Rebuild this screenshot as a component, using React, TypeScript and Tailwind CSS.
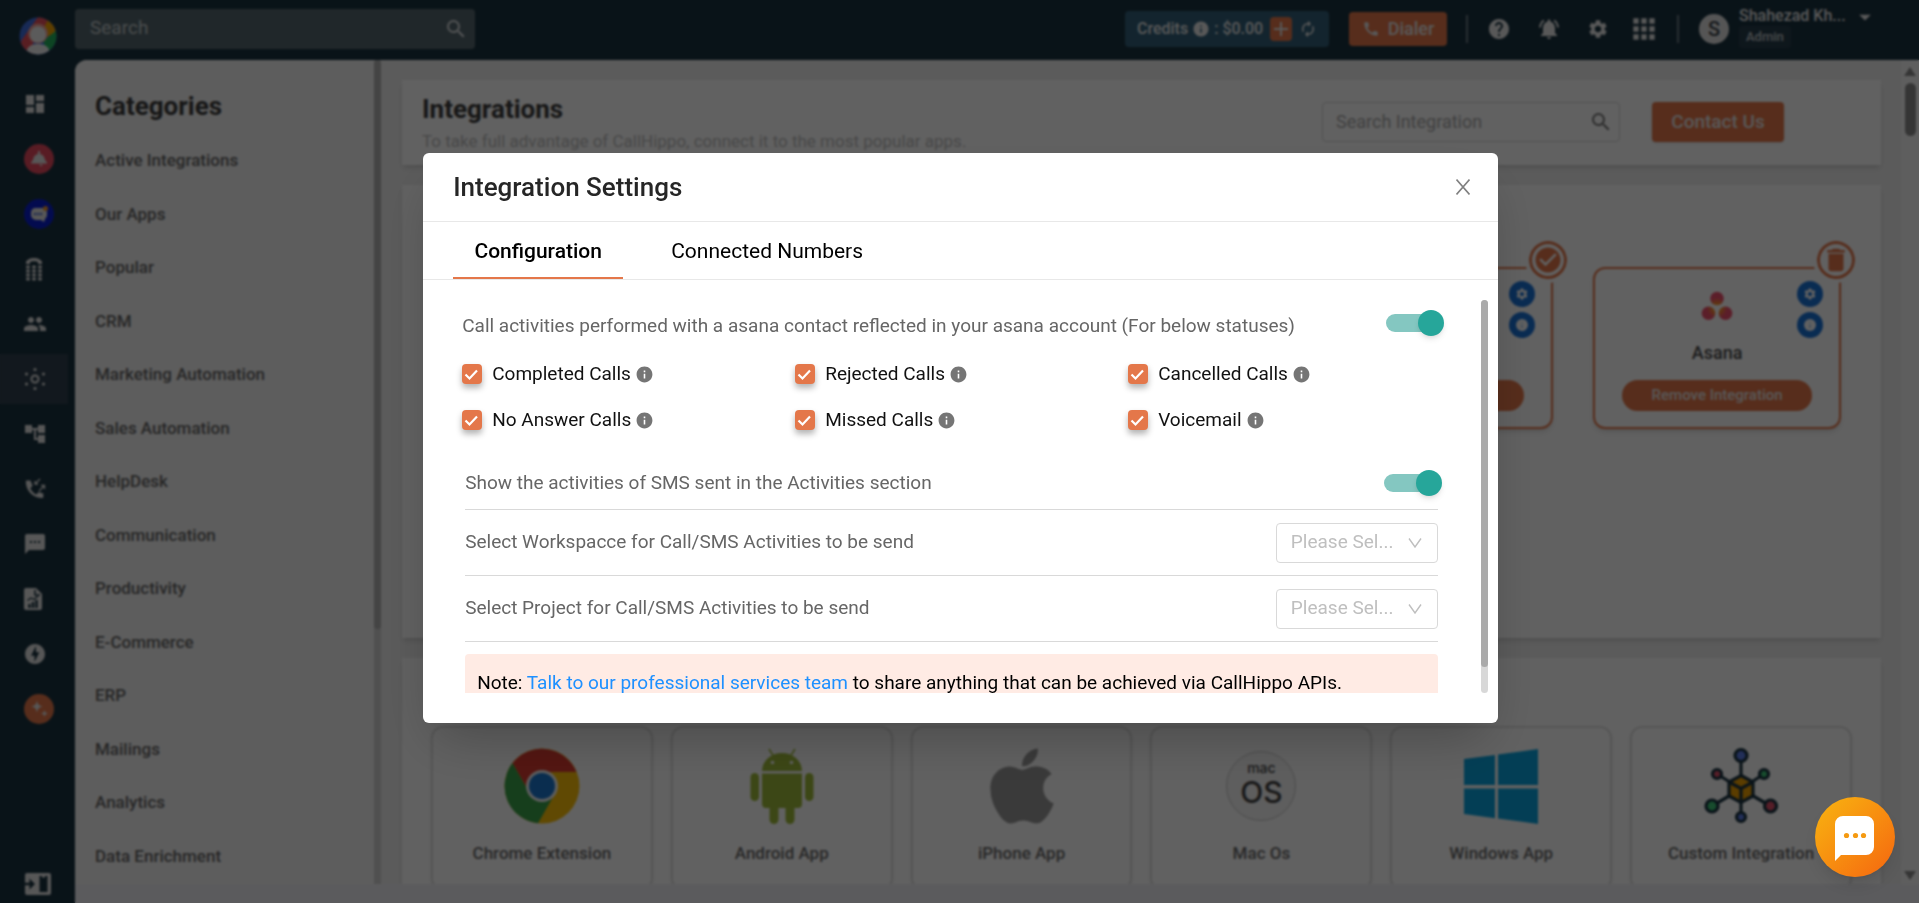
import React from "react";
import {
  MdAccountTree,
  MdApps,
  MdArrowDropDown,
  MdAutorenew,
  MdCall,
  MdCheckCircle,
  MdDashboard,
  MdDelete,
  MdHelp,
  MdInfo,
  MdNotificationsActive,
  MdOfflineBolt,
  MdPeople,
  MdSearch,
  MdSettings,
  MdSms,
} from "react-icons/md";
import { FaApple } from "react-icons/fa";

const categories = [
  "Active Integrations",
  "Our Apps",
  "Popular",
  "CRM",
  "Marketing Automation",
  "Sales Automation",
  "HelpDesk",
  "Communication",
  "Productivity",
  "E-Commerce",
  "ERP",
  "Mailings",
  "Analytics",
  "Data Enrichment",
];

function Logo() {
  return (
    <svg viewBox="0 0 38 38" className="size-[38px]" aria-hidden="true">
      <defs>
        <clipPath id="logo-clip">
          <circle cx="19" cy="19" r="18.5" />
        </clipPath>
      </defs>
      <g clipPath="url(#logo-clip)">
        <rect width="38" height="38" fill="#3f6fe0" />
        <path d="M19 0 L30 0 L30 12 L24 14 L6 28 L2 24 Z" fill="#e8505b" />
        <path d="M0 26 L14 20 L14 38 L6 36 Z" fill="#e8505b" />
        <path d="M29 3 L38 8 L36 16 L28 20 L24 12 Z" fill="#f5a400" />
        <path d="M38 13 L38 30 L28 34 L24 24 Z" fill="#23b45d" />
        <circle cx="19" cy="16.500" r="10" fill="#f3a59a" />
        <circle cx="19" cy="17.500" r="8" fill="#f0f0f0" />
        <path d="M7 38 C7 29 13 27 19 27 C25 27 31 29 31 38 Z" fill="#f0f0f0" />
      </g>
    </svg>
  );
}

function KeypadIcon() {
  return (
    <svg viewBox="0 0 18 24" className="h-6 w-[18px]" fill="currentColor" aria-hidden="true">
      <path d="M1 7V5C2 2.500 5.500 1 9 1s7 1.500 8 4v2h-4V5C11 4 7 4 5 5v2z" />
      {[10, 14, 18, 22].map((y) =>
        [3, 9, 15].map((x) => <rect key={x + "-" + y} x={x - 1.8} y={y - 1.4} width="3.600" height="2.800" rx="0.600" />),
      )}
    </svg>
  );
}

function HubIcon() {
  return (
    <svg viewBox="0 0 24 24" className="size-6" fill="currentColor" aria-hidden="true">
      <circle cx="12" cy="12" r="3.500" fill="none" stroke="currentColor" strokeWidth="2" />
      <circle cx="12" cy="2.500" r="1.600" />
      <circle cx="12" cy="21.500" r="1.600" />
      <circle cx="3.500" cy="7" r="1.600" />
      <circle cx="20.500" cy="7" r="1.600" />
      <circle cx="3.500" cy="17" r="1.600" />
      <circle cx="20.500" cy="17" r="1.600" />
    </svg>
  );
}

function CallLogIcon() {
  return (
    <svg viewBox="0 0 24 24" className="size-6" fill="none" aria-hidden="true">
      <path
        d="M7.500 3.500H3.800c-.6 0-1 .4-1 1C2.800 13.500 10 21 19.300 21c.6 0 1-.4 1-1v-3.600l-4.500-1.300-2.500 2.300c-2.600-1.300-4.700-3.400-6-6l2.300-2.600z"
        fill="currentColor"
      />
      <path d="M17 2l-5 5m0-3v3h3M16 14l5.500-5.500m-3.500 0h3.500V12" stroke="currentColor" strokeWidth="1.300" />
    </svg>
  );
}

function ReportIcon() {
  return (
    <svg viewBox="0 0 20 24" className="h-6 w-5" aria-hidden="true">
      <path d="M3 1h10l6 6v14a2 2 0 0 1-2 2H3a2 2 0 0 1-2-2V3a2 2 0 0 1 2-2z" fill="currentColor" />
      <path d="M12 3v5h5" stroke="#1a3340" strokeWidth="1.500" fill="none" />
      <path d="M6.500 21v-4M10 21v-6M13.500 21v-8" stroke="#1a3340" strokeWidth="2.400" />
      <path d="M4.500 13.500L8 11l3 1.500 4-3.500" stroke="#1a3340" strokeWidth="1.300" fill="none" />
    </svg>
  );
}

function BellDishIcon() {
  return (
    <svg viewBox="0 0 18 16" className="h-4 w-[18px]" fill="currentColor" aria-hidden="true">
      <path d="M8 0h2v3C13 3.500 14.500 6 15 9l2 2.500v1H1v-1L3 9c.5-3 2-5.500 5-6z" />
      <path d="M9 13.500h4l-2 2z" />
    </svg>
  );
}

function ChatBadgeIcon() {
  return (
    <svg viewBox="0 0 20 18" className="h-[18px] w-5" aria-hidden="true">
      <path
        d="M6 3h8a5 5 0 0 1 4 5v2a5 5 0 0 1-2 4l-1 3-3-2H7a5 5 0 0 1-5-5V8a5 5 0 0 1 4-5z"
        fill="currentColor"
      />
      <path d="M5 9h8" stroke="#3a5fd0" strokeWidth="2" strokeDasharray="2 1" />
      <circle cx="16.500" cy="3.500" r="2.500" fill="#f2992e" />
    </svg>
  );
}

function SparkleIcon() {
  return (
    <svg viewBox="0 0 20 20" className="size-5" fill="currentColor" aria-hidden="true">
      <path d="M8 1.500c.8 4 2 5.200 6 6-4 .8-5.200 2-6 6-.8-4-2-5.200-6-6 4-.8 5.200-2 6-6z" />
      <path d="M15.500 11c.5 2.300 1.200 3 3.500 3.500-2.300.5-3 1.200-3.500 3.500-.5-2.300-1.200-3-3.500-3.500 2.300-.5 3-1.200 3.500-3.500z" />
    </svg>
  );
}

function PanelIcon() {
  return (
    <svg viewBox="0 0 26 24" className="h-6 w-[26px]" aria-hidden="true">
      <rect x="0" y="1" width="26" height="22" rx="2" fill="currentColor" />
      <rect x="14.500" y="4" width="8" height="16" fill="#1a3340" />
      <path d="M0 10.700h4.500V6.500L10 12l-5.500 5.500v-4.200H0z" fill="#1a3340" />
      <rect x="17" y="3.500" width="3" height="2" fill="currentColor" />
    </svg>
  );
}

function Chrome() {
  return (
    <svg viewBox="0 0 76 76" className="size-[76px]" aria-hidden="true">
      <circle cx="38" cy="38" r="37.500" fill="#fbc009" />
      <path d="M8.500 15A37.500 37.500 0 0 1 72.500 24H38L24 42z" fill="#db3b30" />
      <path d="M8.500 15A37.500 37.500 0 0 0 34 75.300L49 49 38 40 25 44z" fill="#3aa24b" />
      <circle cx="38" cy="38" r="16" fill="#f5f5f5" />
      <circle cx="38" cy="38" r="13" fill="#1b78d0" />
    </svg>
  );
}

function Android() {
  return (
    <svg viewBox="0 0 64 76" className="h-[76px] w-16" fill="#9fbb3b" aria-hidden="true">
      <path d="M12 23a20 18 0 0 1 40 0z" />
      <path d="M19 1l5 8M45 1l-5 8" stroke="#9fbb3b" strokeWidth="1.500" />
      <path d="M12 25.500h40V56a4 4 0 0 1-4 4H16a4 4 0 0 1-4-4z" />
      <rect x="0.500" y="25" width="8.500" height="28" rx="4.250" />
      <rect x="55" y="25" width="8.500" height="28" rx="4.250" />
      <rect x="19.500" y="50" width="9" height="26" rx="4.500" />
      <rect x="35.500" y="50" width="9" height="26" rx="4.500" />
      <circle cx="22.500" cy="14.500" r="1.800" fill="#fff" />
      <circle cx="41.500" cy="14.500" r="1.800" fill="#fff" />
    </svg>
  );
}

function MacOs() {
  return (
    <span className="flex size-[70px] flex-col items-center justify-center rounded-full border border-[#c8c8c8] bg-[#f6f6f6] pb-1 font-['Inter',sans-serif] text-[#444]">
      <span className="text-sm leading-4 font-medium">mac</span>
      <span className="text-3xl leading-8 font-medium">OS</span>
    </span>
  );
}

function Windows() {
  return (
    <svg viewBox="0 0 74 76" className="h-[76px] w-[74px]" fill="#0aa4e0" aria-hidden="true">
      <path d="M0 11L31 7v30H0zM34 6.500L74 1v36H34zM0 40.500h31v29.700L0 66zM34 40.500h40V76l-40-5.500z" />
    </svg>
  );
}

function CustomHub() {
  const nodes = [
    { x: 37, y: 8.5, r: 6, c: "#5b7be8" },
    { x: 13, y: 27, r: 4.5, c: "#e0506a" },
    { x: 60, y: 27, r: 4.5, c: "#3fc878" },
    { x: 8, y: 59, r: 6, c: "#3fc878" },
    { x: 66.5, y: 59, r: 6, c: "#e0506a" },
    { x: 37, y: 70, r: 4.5, c: "#5b7be8" },
  ];
  return (
    <svg viewBox="0 0 74 78" className="h-[78px] w-[74px]" stroke="#1b3442" strokeWidth="3.200" aria-hidden="true">
      {nodes.map((n, i) => (
        <g key={i}>
          <line x1="37" y1="42" x2={n.x} y2={n.y} />
          <circle cx={n.x} cy={n.y} r={n.r} fill={n.c} />
        </g>
      ))}
      <path d="M37 28.500l12 6.500v14l-12 6.500L25 49V35z" fill="#f0a000" />
      <path d="M25 35l12 6.500L49 35M37 41.500V55" fill="none" />
    </svg>
  );
}

function AsanaLogo() {
  return (
    <svg viewBox="0 0 32 30" className="h-[30px] w-8" aria-hidden="true">
      <defs>
        <radialGradient id="asana-fill" gradientUnits="userSpaceOnUse" cx="16" cy="17" r="17">
          <stop offset="0" stopColor="#ffb900" />
          <stop offset="0.600" stopColor="#f0506e" />
          <stop offset="1" stopColor="#f0506e" />
        </radialGradient>
      </defs>
      <circle cx="16" cy="7.500" r="6.800" fill="url(#asana-fill)" />
      <circle cx="7.500" cy="22.300" r="6.800" fill="url(#asana-fill)" />
      <circle cx="24.500" cy="22.300" r="6.800" fill="url(#asana-fill)" />
    </svg>
  );
}

const sideItems = [
  { name: "Dashboard", icon: <MdDashboard className="size-6" /> },
  { name: "Alerts", icon: <BellDishIcon />, disc: "bg-[#e84a5f]" },
  { name: "Chatbot", icon: <ChatBadgeIcon />, disc: "bg-[#0a1fd0]" },
  { name: "Keypad", icon: <KeypadIcon />, narrow: true },
  { name: "Contacts", icon: <MdPeople className="size-6" /> },
  { name: "Integrations", icon: <HubIcon />, active: true },
  { name: "Workflows", icon: <MdAccountTree className="size-6" /> },
  { name: "Call log", icon: <CallLogIcon /> },
  { name: "Messages", icon: <MdSms className="size-6" /> },
  { name: "Reports", icon: <ReportIcon /> },
  { name: "Power dialer", icon: <MdOfflineBolt className="size-6" /> },
  { name: "Assistant", icon: <SparkleIcon />, disc: "bg-[#e4774a]" },
];

function Sidebar() {
  return (
    <nav aria-label="Main" className="flex w-[75px] shrink-0 flex-col bg-[#1a3340] pt-[17px] pb-1 text-[#e4e4e4]">
      <a href="#home" aria-label="Home" className="ml-[19px] block">
        <Logo />
      </a>
      <ul className="mt-6 flex flex-col gap-[5px]">
        {sideItems.map((item) => (
          <li key={item.name}>
            <a
              href={"#" + item.name.toLowerCase().replace(" ", "-")}
              aria-label={item.name}
              className={
                item.active
                  ? "flex h-[50px] w-[68px] items-center bg-[#30404f] pl-[23px]"
                  : item.disc
                    ? "flex h-[50px] w-[68px] items-center pl-6"
                    : item.narrow
                      ? "flex h-[50px] w-[68px] items-center pl-[25px]"
                      : "flex h-[50px] w-[68px] items-center pl-[23px]"
              }
            >
              {item.disc ? (
                <span className={"flex size-[30px] items-center justify-center rounded-full " + item.disc}>{item.icon}</span>
              ) : (
                item.icon
              )}
            </a>
          </li>
        ))}
      </ul>
      <button type="button" aria-label="Expand sidebar" className="mt-auto ml-[25px] self-start pb-[3px]">
        <PanelIcon />
      </button>
    </nav>
  );
}

function Header() {
  return (
    <header className="flex h-[60px] shrink-0 items-center bg-[#1a3340] pr-11 pb-[3px] text-[#e8e8e8]">
      <div className="flex h-10 w-[400px] items-center rounded bg-[#566870] px-[15px]">
        <input
          type="search"
          aria-label="Search"
          placeholder="Search"
          className="min-w-0 flex-1 bg-transparent text-[19px] outline-none placeholder:text-[#c2c8ca]"
        />
        <MdSearch className="-mr-2 size-6 text-[#d8dcde]" />
      </div>
      <div className="ml-auto flex items-center">
        <div className="flex h-9 w-[204px] items-center justify-between rounded bg-[#33607a] px-3 text-base font-medium">
          <span className="flex items-center gap-1">
            Credits <MdInfo className="size-[18px]" /> : $0.00
          </span>
          <button type="button" aria-label="Add credits" className="flex h-6 w-[22px] items-center justify-center rounded bg-[#e4774a]">
            <svg viewBox="0 0 14 14" className="size-3.5" aria-hidden="true">
              <path d="M7 0v14M0 7h14" stroke="currentColor" strokeWidth="2" />
            </svg>
          </button>
          <button type="button" aria-label="Refresh credits">
            <MdAutorenew className="size-[18px]" />
          </button>
        </div>
        <button type="button" className="ml-5 flex h-[34px] w-[98px] items-center justify-center gap-2 rounded bg-[#e4774a] text-lg font-medium">
          <MdCall className="size-[18px]" /> Dialer
        </button>
        <span className="ml-[19px] h-7 w-0.5 bg-[#6a7a84]" />
        <div className="ml-[19px] flex items-center gap-[26px]">
          <button type="button" aria-label="Help"><MdHelp className="size-6" /></button>
          <button type="button" aria-label="Notifications"><MdNotificationsActive className="size-6" /></button>
          <button type="button" aria-label="Settings"><MdSettings className="size-[22px]" /></button>
          <button type="button" aria-label="Apps" className="-ml-[7px]"><MdApps className="size-8" /></button>
        </div>
        <span className="ml-[17px] h-7 w-0.5 bg-[#6a7a84]" />
        <span className="ml-5 flex size-[30px] items-center justify-center rounded-full bg-[#e0e0e0] text-xl font-medium text-[#3a4248]">S</span>
        <div className="ml-2.5 flex w-28 flex-col items-start pb-1">
          <span className="text-base leading-5 font-medium">Shahezad Kh...</span>
          <span className="rounded bg-[#273d4b] px-[7px] text-[13px] leading-[22px] font-medium text-[#c0c6ca]">Admin</span>
        </div>
        <button type="button" aria-label="Account menu" className="mb-6">
          <MdArrowDropDown className="-mr-1 size-7" />
        </button>
      </div>
    </header>
  );
}

function Categories() {
  return (
    <aside className="flex w-[306px] shrink-0 bg-[#f4f4f4]">
      <div className="flex min-w-0 flex-1 flex-col pt-7 pb-4 pl-5">
        <h2 className="text-[26px] leading-9 font-bold text-[#3c3c3c]">Categories</h2>
        <ul className="mt-6 flex flex-1 flex-col justify-between">
          {categories.map((c) => (
            <li key={c}>
              <a href={"#" + c.toLowerCase().replace(" ", "-")} className="block text-[17px] leading-6 font-medium text-[#666]">
                {c}
              </a>
            </li>
          ))}
        </ul>
      </div>
      <div className="w-[7px] bg-[#d2d2d2]">
        <div className="h-[69%] rounded-full bg-[#b2b2b2]" />
      </div>
    </aside>
  );
}

function AppCard({ name, remove, children }: { name: string; remove?: boolean; children: React.ReactNode }) {
  return (
    <article className="relative flex h-[162px] flex-col items-center rounded-xl border-2 border-[#e4774a] px-[27px] pt-[22px] shadow-md">
      {children}
      <h3 className="mt-[18px] text-lg leading-7 font-medium text-[#4a4a4a]">{name}</h3>
      <button type="button" className="mt-[13px] h-[31px] w-full rounded-full bg-[#e4774a] text-[15px] font-medium text-[#e8e8e8]">
        {remove ? "Remove Integration" : "Integrate"}
      </button>
      <button
        type="button"
        aria-label={remove ? "Delete " + name : name + " is active"}
        className="absolute -top-7 -right-4 flex size-[38px] items-center justify-center rounded-full border-[3px] border-[#e4774a] bg-white text-[#e4774a] outline-4 outline-white"
      >
        {remove ? <MdDelete className="size-[30px]" /> : <MdCheckCircle className="size-[30px]" />}
      </button>
      <div className="absolute top-3 right-4 flex flex-col gap-[5px] text-white">
        <button type="button" aria-label={name + " settings"} className="flex size-[26px] items-center justify-center rounded-full bg-[#1a73d8]">
          <MdSettings className="size-3.5" />
        </button>
        <button type="button" aria-label={name + " details"} className="flex size-[26px] items-center justify-center rounded-full bg-[#1a73d8]">
          <svg viewBox="0 0 12 12" className="size-3" aria-hidden="true">
            <circle cx="6" cy="6" r="6" fill="currentColor" />
            <path d="M6 3v1M6 5.500v3.500" stroke="#8fb8e8" strokeWidth="1.200" />
          </svg>
        </button>
      </div>
    </article>
  );
}

const ownApps = [
  { name: "Chrome Extension", icon: <Chrome /> },
  { name: "Android App", icon: <Android /> },
  { name: "iPhone App", icon: <FaApple className="size-[86px] text-[#999]" /> },
  { name: "Mac Os", icon: <MacOs /> },
  { name: "Windows App", icon: <Windows /> },
  { name: "Custom Integration", icon: <CustomHub /> },
];

function Integrations() {
  return (
    <main className="flex min-w-0 flex-1 flex-col gap-5 overflow-hidden bg-[#efefef] pt-5 pr-5 pl-[21px]">
      <section className="flex h-[85px] shrink-0 items-start justify-between bg-white pr-[97px] pl-5 shadow-md">
        <div className="pt-[11px]">
          <h1 className="text-[26px] leading-9 font-bold text-[#3c3c3c]">Integrations</h1>
          <p className="text-[17px] leading-7 text-[#bdbdbd]">
            To take full advantage of CallHippo, connect it to the most popular apps.
          </p>
        </div>
        <div className="flex gap-8 pt-[22px]">
          <div className="flex h-10 w-[298px] items-center rounded border border-[#d5d5d5] pr-1.5 pl-[13px]">
            <input
              type="search"
              aria-label="Search Integration"
              placeholder="Search Integration"
              className="min-w-0 flex-1 bg-transparent text-lg outline-none placeholder:text-[#aaa]"
            />
            <MdSearch className="size-6 text-[#777]" />
          </div>
          <button type="button" className="h-10 w-[132px] rounded bg-[#e4774a] text-[19px] font-medium text-[#e8e8e8] shadow">
            Contact Us
          </button>
        </div>
      </section>
      <section aria-label="Active integrations" className="h-[453px] shrink-0 bg-white px-10 pt-[82px] shadow-md">
        <div className="grid grid-cols-5 gap-10">
          <div className="col-span-3" />
          <AppCard name="Zapier">
            <span className="h-[30px]" />
          </AppCard>
          <AppCard name="Asana" remove>
            <AsanaLogo />
          </AppCard>
        </div>
      </section>
      <section aria-label="Our apps" className="shrink-0 bg-white px-[29px] pt-[68px] pb-8 shadow-md">
        <div className="grid grid-cols-6 gap-[18px]">
          {ownApps.map((app) => (
            <article key={app.name} className="flex h-[164px] flex-col items-center rounded-xl border-2 border-[#e2e2e2] pt-3 shadow">
              <div className="flex h-[92px] items-center justify-center">{app.icon}</div>
              <h3 className="mt-[9px] text-[17px] leading-6 font-medium whitespace-nowrap text-[#6a6a6a]">{app.name}</h3>
            </article>
          ))}
        </div>
      </section>
    </main>
  );
}

function PageScrollbar() {
  return (
    <div className="flex w-[18px] shrink-0 flex-col items-center bg-[#f8f8f8] pt-[7px] pb-1 text-[#8c8c8c]">
      <svg viewBox="0 0 12 9" className="h-[9px] w-3" fill="currentColor" aria-hidden="true"><path d="M6 0l6 9H0z" /></svg>
      <div className="mt-[7px] h-[53px] w-[11px] rounded-full bg-[#8c8c8c]" />
      <svg viewBox="0 0 12 9" className="mt-auto h-[9px] w-3" fill="currentColor" aria-hidden="true"><path d="M6 9L0 0h12z" /></svg>
    </div>
  );
}

function Toggle({ label }: { label: string }) {
  return (
    <input
      type="checkbox"
      role="switch"
      defaultChecked
      aria-label={label}
      className="mr-0.5 h-[18px] w-[52px] shrink-0 appearance-none rounded-full bg-[#84c7c1] before:-mt-1 before:ml-8 before:block before:size-[26px] before:rounded-full before:bg-[#26a69a] before:shadow-md"
    />
  );
}

function StatusOption({ label }: { label: string }) {
  const id = "status-" + label.toLowerCase().replaceAll(" ", "-");
  return (
    <div className="flex h-[46px] items-center">
      <span className="relative mr-2.5 flex size-5">
        <input id={id} type="checkbox" defaultChecked className="size-5 appearance-none rounded bg-[#e4774a] shadow-[0_4px_6px_rgba(0,0,0,0.3)]" />
        <svg viewBox="0 0 20 20" className="pointer-events-none absolute inset-0 size-5" fill="none" aria-hidden="true">
          <path d="M3.500 10.500l4 4 7.500-8" stroke="#fff" strokeWidth="2.200" />
        </svg>
      </span>
      <label htmlFor={id} className="text-[19px] leading-6 text-[#111]">{label}</label>
      <MdInfo className="ml-1 size-[19px] text-[#757575]" />
    </div>
  );
}

function SelectRow({ id, label }: { id: string; label: string }) {
  return (
    <div className="flex h-[66px] items-center justify-between border-b border-[#d9d9d9]">
      <label htmlFor={id} className="text-[19px] text-[#666]">{label}</label>
      <div className="relative">
        <select id={id} className="block h-10 w-[162px] appearance-none rounded border border-[#d9d9d9] bg-white pr-10 pl-3.5 text-[19px] text-[#bfbfbf]">
          <option>Please Sel...</option>
        </select>
        <svg viewBox="0 0 14 10" className="pointer-events-none absolute top-[15px] right-4 h-2.5 w-3.5" fill="none" aria-hidden="true">
          <path d="M1 0.500l6 8.500 6-8.500" stroke="#bfbfbf" strokeWidth="1.400" />
        </svg>
      </div>
    </div>
  );
}

const statuses = ["Completed Calls", "Rejected Calls", "Cancelled Calls", "No Answer Calls", "Missed Calls", "Voicemail"];

function SettingsDialog() {
  const callText =
    "Call activities performed with a asana contact reflected in your asana account (For below statuses)";
  const smsText = "Show the activities of SMS sent in the Activities section";
  return (
    <div className="fixed inset-0 flex items-start justify-center bg-black/62 pt-[153px] pl-0.5 backdrop-blur-[1px]">
      <div
        role="dialog"
        aria-modal="true"
        aria-labelledby="dialog-title"
        className="flex w-[56vw] min-w-[1070px] flex-col rounded-md bg-white pb-[30px] shadow-2xl"
      >
        <div className="flex h-[69px] items-center justify-between border-b border-[#e8e8e8] pr-7 pl-[30px]">
          <h2 id="dialog-title" className="text-[26px] font-medium text-[#262626]">Integration Settings</h2>
          <button type="button" aria-label="Close" className="text-[#808080]">
            <svg viewBox="0 0 14 16" className="h-4 w-3.5" fill="none" aria-hidden="true">
              <path d="M0.500 0.500l13 15M13.500 0.500l-13 15" stroke="currentColor" strokeWidth="1.600" />
            </svg>
          </button>
        </div>
        <div role="tablist" className="flex h-[58px] gap-7 border-b border-[#e8e8e8] px-[30px] text-[21px] text-black">
          <button type="button" role="tab" aria-selected="true" className="w-[170px] border-b-2 border-[#e4774a] pt-1 font-medium">
            Configuration
          </button>
          <button type="button" role="tab" aria-selected="false" className="border-b-2 border-transparent px-5 pt-1">
            Connected Numbers
          </button>
        </div>
        <div className="mt-5 mr-2.5 flex max-h-[393px] overflow-hidden">
          <div className="min-w-0 flex-1 pr-[43px] pl-[39px]">
            <div className="-mr-0.5 flex h-[46px] items-center justify-between">
              <p className="pt-1.5 text-[19px] text-[#666]">{callText}</p>
              <Toggle label={callText} />
            </div>
            <div className="mt-[5px] grid grid-cols-[333px_333px_1fr]">
              {statuses.map((s) => (
                <StatusOption key={s} label={s} />
              ))}
            </div>
            <div className="pl-[3px]">
              <div className="mt-[14px] flex h-[53px] items-center justify-between border-b border-[#d9d9d9]">
                <p className="text-[19px] text-[#666]">{smsText}</p>
                <Toggle label={smsText} />
              </div>
              <SelectRow id="workspace" label="Select Workspacce for Call/SMS Activities to be send" />
              <SelectRow id="project" label="Select Project for Call/SMS Activities to be send" />
              <p className="mt-3 h-16 rounded bg-[#ffebe4] px-3 pt-4 text-[19px] leading-[26px] text-black">
                Note: <a href="#services" className="text-[#1e90ff]">Talk to our professional services team</a> to share
                anything that can be achieved via CallHippo APIs.
              </p>
            </div>
          </div>
          <div className="w-[7px] shrink-0 rounded bg-[#d8d8d8]">
            <div className="h-[367px] rounded bg-[#aaa]" />
          </div>
        </div>
      </div>
    </div>
  );
}

export default function App() {
  return (
    <div className="flex h-screen overflow-hidden bg-[#1a3340] font-['Roboto',sans-serif]">
      <Sidebar />
      <div className="flex min-w-0 flex-1 flex-col">
        <Header />
        <div className="flex min-h-0 flex-1 flex-col overflow-hidden rounded-tl-xl bg-[#f0f0f5]">
          <div className="mb-[19px] flex min-h-0 flex-1">
            <Categories />
            <Integrations />
            <PageScrollbar />
          </div>
        </div>
      </div>
      <SettingsDialog />
      <button
        type="button"
        aria-label="Open chat"
        className="fixed right-6 bottom-[26px] flex size-20 items-center justify-center rounded-full bg-linear-to-br from-[#f7b410] to-[#f4640f] shadow-lg"
      >
        <svg viewBox="0 0 40 46" className="mt-1 h-[46px] w-10" aria-hidden="true">
          <path d="M8 0h23a8 8 0 0 1 8 8v23a8 8 0 0 1-8 8H6l-6 6V8a8 8 0 0 1 8-8z" fill="#fff" />
          <circle cx="11.500" cy="19.500" r="2.600" fill="#f59a12" />
          <circle cx="20.500" cy="19.500" r="2.600" fill="#f59a12" />
          <circle cx="28.500" cy="19.500" r="2.600" fill="#f59a12" />
        </svg>
      </button>
    </div>
  );
}
